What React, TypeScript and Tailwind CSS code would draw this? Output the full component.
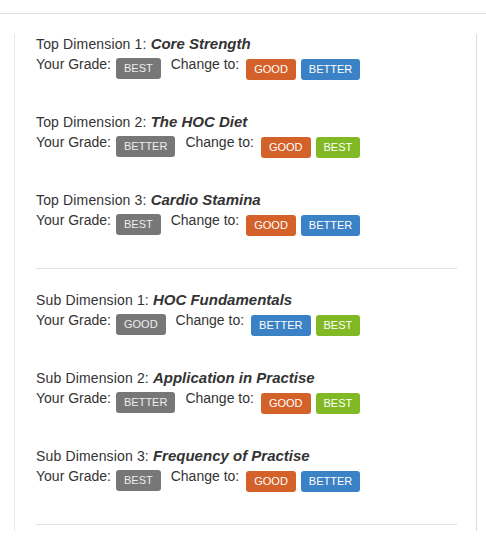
import React from "react";

type Grade = "GOOD" | "BETTER" | "BEST";

interface Dimension {
  label: string;
  name: string;
  grade: Grade;
}

const TOP: Dimension[] = [
  { label: "Top Dimension 1:", name: "Core Strength", grade: "BEST" },
  { label: "Top Dimension 2:", name: "The HOC Diet", grade: "BETTER" },
  { label: "Top Dimension 3:", name: "Cardio Stamina", grade: "BEST" },
];

const SUB: Dimension[] = [
  { label: "Sub Dimension 1:", name: "HOC Fundamentals", grade: "GOOD" },
  { label: "Sub Dimension 2:", name: "Application in Practise", grade: "BETTER" },
  { label: "Sub Dimension 3:", name: "Frequency of Practise", grade: "BEST" },
];

const ALL: Grade[] = ["GOOD", "BETTER", "BEST"];

const gradeColor: Record<Grade, string> = {
  GOOD: "bg-[#d4602a] hover:bg-[#bf5422]",
  BETTER: "bg-[#3b81c5] hover:bg-[#326fab]",
  BEST: "bg-[#80b924] hover:bg-[#6fa31d]",
};

function DimensionRow({ dim }: { dim: Dimension }) {
  const options = ALL.filter((g) => g !== dim.grade);
  return (
    <div className="mb-[32px]">
      <div className="h-5 leading-5 tracking-[0.15px]">
        {dim.label} <b className="text-[15px] italic tracking-normal">{dim.name}</b>
      </div>
      <div className="flex h-[26px] items-start leading-5">
        <span>Your Grade:</span>
        <span className="ml-[5px] mt-[4px] h-[21px] rounded-[3px] bg-[#777] px-2 text-[11px] leading-[21px] text-[#eee]">
          {dim.grade}
        </span>
        <span className="ml-[10px]">Change to:</span>
        {options.map((g, i) => (
          <button
            key={g}
            className={`${i === 0 ? "ml-[7px]" : "ml-[5px]"} mt-[5px] h-[21px] rounded-[3px] px-2 text-[11px] leading-[21px] text-white ${gradeColor[g]}`}
          >
            {g}
          </button>
        ))}
      </div>
    </div>
  );
}

export default function App() {
  return (
    <div
      className="min-h-[546px] bg-white text-[14px] text-[#333]"
      style={{ fontFamily: '"Liberation Sans", Helvetica, Arial, sans-serif' }}
    >
      <div className="h-[14px] border-b border-[#dedede]" />
      <div className="ml-[14px] mr-[9px] mt-[20px] border-l border-r border-l-[#e6e6e6] border-r-[#dcdcdc] border-r-dotted pl-[21px] pr-[19px]">
        {TOP.map((d) => (
          <DimensionRow key={d.name} dim={d} />
        ))}
        <div className="mt-[1px] border-t border-[#e2e2e2]" />
        <div className="h-[21px]" />
        {SUB.map((d) => (
          <DimensionRow key={d.name} dim={d} />
        ))}
        <div className="mt-[1px] border-t border-[#e2e2e2]" />
        <div className="h-[6px]" />
      </div>
    </div>
  );
}
